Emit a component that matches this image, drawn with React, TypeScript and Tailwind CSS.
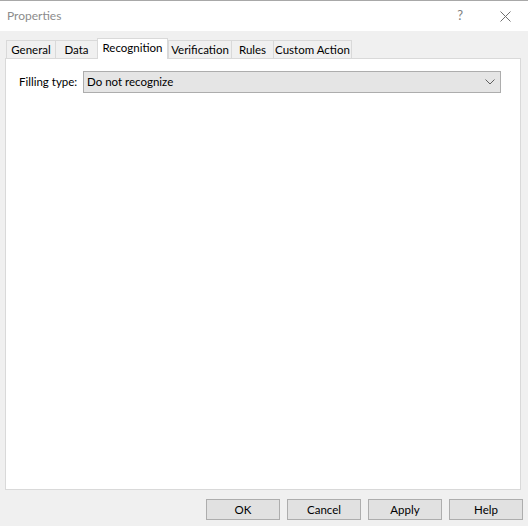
import React, { useState } from 'react';

// --- ICONS ---

const ChevronDown = () => (
    <svg width="10" height="6" viewBox="0 0 10 6" fill="none" stroke="#606060" strokeWidth="1"><polyline points="0.5,0.5 5,5 9.5,0.5" /></svg>
);

const CloseIcon = () => (
    <svg width="11" height="11" viewBox="0 0 11 11" fill="none" stroke="#707070" strokeWidth="1"><line x1="0.5" y1="0.5" x2="10.5" y2="10.5" /><line x1="10.5" y1="0.5" x2="0.5" y2="10.5" /></svg>
);

const tabs = [
    { name: 'General', w: 'w-[49px]' },
    { name: 'Data', w: 'w-[42px]' },
    { name: 'Recognition', w: 'w-[71px]' },
    { name: 'Verification', w: 'w-[63px]' },
    { name: 'Rules', w: 'w-[42px]' },
    { name: 'Custom Action', w: 'w-[79px]' },
];

const buttons = ['OK', 'Cancel', 'Apply', 'Help'];

export default function App() {
    const [active, setActive] = useState('Recognition');

    return (
        <div className="w-[528px] h-[526px] bg-[#f0f0f0] flex flex-col text-[11.5px] text-black font-['Segoe_UI',Lato,sans-serif] overflow-hidden whitespace-nowrap">
            {/* Title bar */}
            <div className="h-[31px] bg-white border-t border-[#a8a8a8] flex items-center pl-[7px] pr-[17px]">
                <span className="text-[#8c8c8c] text-[12px] flex-1">Properties</span>
                <span className="text-[#808080] text-[13px] mr-[37px]">?</span>
                <CloseIcon />
            </div>

            {/* Tabs */}
            <div className="pt-[7px] pl-[5px] pr-[7px]">
                <div className="flex items-end h-[20px] pl-[1px] relative z-10">
                    {tabs.map((t, i) => {
                        const selected = t.name === active;
                        const last = i === tabs.length - 1;
                        return selected ? (
                            <button
                                key={t.name}
                                onClick={() => setActive(t.name)}
                                className={`${t.w} h-[21px] -mb-px bg-white border border-b-0 border-[#d9d9d9] flex items-start justify-center pt-[1px] leading-[16px]`}
                            >
                                {t.name}
                            </button>
                        ) : (
                            <button
                                key={t.name}
                                onClick={() => setActive(t.name)}
                                className={`${t.w} h-[18px] bg-[#f0f0f0] border-t border-l ${last ? 'border-r' : ''} border-[#d9d9d9] flex items-center justify-center leading-[16px] pt-[1px]`}
                            >
                                {t.name}
                            </button>
                        );
                    })}
                </div>

                {/* Panel */}
                <div className="h-[432px] bg-white border border-[#d9d9d9] pt-[12px] pl-[13px] pr-[19px]">
                    <div className="flex items-center">
                        <span className="w-[64px]">Filling type:</span>
                        <div className="flex-1 h-[22px] bg-[#e5e5e5] border border-[#adadad] flex items-center pl-[3px] pr-[5px]">
                            <span className="flex-1">Do not recognize</span>
                            <ChevronDown />
                        </div>
                    </div>
                </div>
            </div>

            {/* Footer buttons */}
            <div className="flex justify-end gap-[7px] pt-[9px] pr-[5px]">
                {buttons.map(b => (
                    <button key={b} className="w-[74px] h-[21px] bg-[#e1e1e1] border border-[#adadad] flex items-center justify-center">
                        {b}
                    </button>
                ))}
            </div>
        </div>
    );
}
